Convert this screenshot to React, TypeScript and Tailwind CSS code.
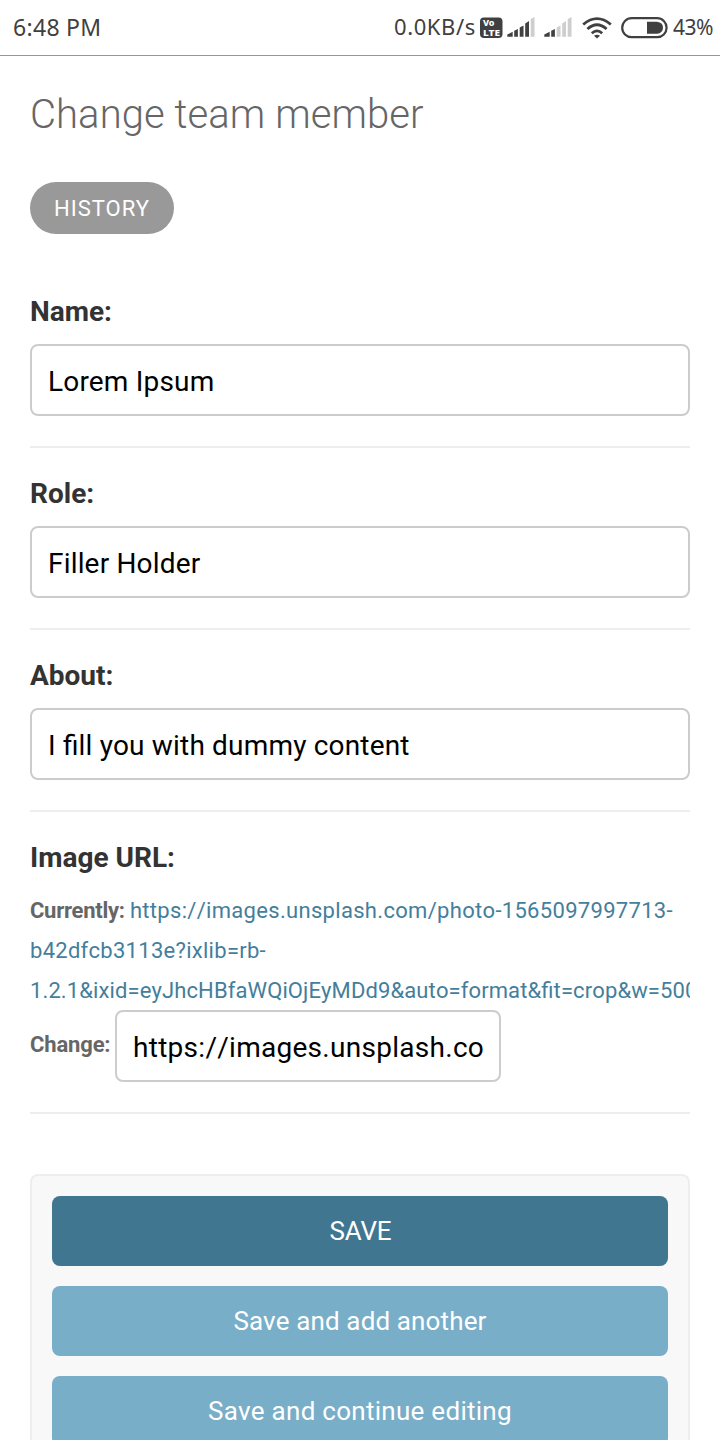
import React from "react";

function Signal({ active }: { active: number }) {
  const bars = [
    "M.300 19.700V17.500L5.700 14.800V19.700Z",
    "M7.200 19.700V13.800L10.900 12V19.700Z",
    "M12.700 19.700V10.500L16.500 8.500V19.700Z",
    "M18.200 19.700V6.500L22 4V19.700Z",
    "M23.700 19.700V2L27.500 0V19.700Z",
  ];
  return (
    <svg width="28" height="20" viewBox="0 0 28 20" className="shrink-0">
      {bars.map((d, i) => (
        <path key={i} d={d} fill={i < active ? "#404040" : "#cecece"} />
      ))}
    </svg>
  );
}

function StatusBar() {
  return (
    <header className="flex h-14 shrink-0 items-center border-b border-[#74a2b5] pl-[13px] text-[#404040] font-['Noto_Sans',sans-serif] text-[22px]">
      <span className="w-[381px] text-[23px] leading-none tracking-[0.3px]">6:48 PM</span>
      <span className="w-[86px] pb-[3px] leading-none tracking-[0.6px]">0.0KB/s</span>
      <svg width="23" height="22" viewBox="0 0 23 22" className="shrink-0">
        <rect x="0" y="0.500" width="22.500" height="20.500" rx="4" fill="#404040" />
        <text x="3" y="9.300" fontSize="9" fontWeight="800" fill="#fff">Vo</text>
        <text x="3" y="18.700" fontSize="9" fontWeight="800" fill="#fff" textLength="17" lengthAdjust="spacingAndGlyphs">LTE</text>
      </svg>
      <div className="ml-[4px] flex gap-[9px] pb-px">
        <Signal active={4} />
        <Signal active={2} />
      </div>
      <svg width="30" height="22" viewBox="0 0 30 22" className="ml-[10px] shrink-0" fill="none" stroke="#404040" strokeWidth="2.800">
        <path d="M1.200 7.500Q15-4.200 28.800 7.500M5.400 12Q15 3.500 24.600 12M9.800 16.200Q15 11.500 20.200 16.200" />
        <path d="M12 18.800Q15 16.500 18 18.800L15 21.500Z" fill="#404040" stroke="none" />
      </svg>
      <svg width="47" height="22" viewBox="0 0 47 22" className="ml-[9px] shrink-0">
        <rect x="1.200" y="1.200" width="44.400" height="19" rx="9.500" fill="none" stroke="#404040" strokeWidth="2.200" />
        <path d="M26 4.800H36Q42 5.500 42 10.700T36 16.800H26Z" fill="#404040" />
      </svg>
      <span className="ml-[5px] pb-px text-[21px] leading-none tracking-[-0.5px]">43%</span>
    </header>
  );
}

function Field({ label, value }: { label: string; value: string }) {
  return (
    <div className="h-[182px] border-b-2 border-[#eee] pt-[30px]">
      <label className="block h-[48px] text-[28px] leading-8 font-bold text-[#333]">{label}</label>
      <input
        className="block h-[72px] w-full rounded-lg border-2 border-[#ccc] bg-white px-4 pt-[3px] text-[28px] tracking-[0.18px] text-black [font-feature-settings:'liga'_1]"
        defaultValue={value}
      />
    </div>
  );
}

export default function App() {
  return (
    <div className="flex h-[1440px] w-[720px] flex-col overflow-hidden bg-white font-[Roboto,sans-serif]">
      <StatusBar />
      <main className="px-[30px]">
        <h1 className="mt-[35px] text-[40px] leading-[48px] font-light tracking-[0.08px] text-[#666]">Change team member</h1>
        <a className="mt-[43px] flex h-[52px] w-36 items-center justify-center rounded-full bg-[#999] text-[22px] tracking-[1px] text-white">
          HISTORY
        </a>
        <form className="mt-8">
          <Field label="Name:" value="Lorem Ipsum" />
          <Field label="Role:" value="Filler Holder" />
          <Field label="About:" value="I fill you with dummy content" />
          <div className="h-[302px] border-b-2 border-[#eee] pt-[30px]">
            <label className="block h-[49px] text-[28px] leading-8 font-bold text-[#333]">Image URL:</label>
            <p className="-mb-px overflow-hidden text-[22px] leading-10 font-bold tracking-[-0.27px] text-[#666]">
              Currently:{" "}
              <a className="font-normal whitespace-nowrap text-[#447e9b] [font-feature-settings:'liga'_1] [font-kerning:none]">
                <span className="tracking-[0.31px]">https://images.unsplash.com/photo-1565097997713-</span>
                <br />
                <span className="tracking-[0.28px]">b42dfcb3113e?ixlib=rb-</span>
                <br />
                <span className="tracking-[0.11px]">1.2.1&amp;ixid=eyJhcHBfaWQiOjEyMDd9&amp;auto=format&amp;fit=crop&amp;w=500&amp;q=60</span>
              </a>
            </p>
            <div className="flex text-[22px] font-bold text-[#666]">
              <span className="w-[85px] pt-[19px] leading-8 tracking-[-0.15px]">Change:</span>
              <input
                className="h-[72px] w-[386px] rounded-lg border-2 border-[#ccc] bg-white px-4 pt-[3px] text-[28px] font-normal tracking-[0.28px] text-black [font-kerning:none]"
                defaultValue="https://images.unsplash.co"
              />
            </div>
          </div>
          <div className="mt-[60px] flex flex-col gap-5 rounded-t-lg border-2 border-[#eee] bg-[#f8f8f8] p-5 text-[26px] text-white">
            <button type="button" className="h-[70px] rounded-lg bg-[#417690] pl-px tracking-[-0.2px]">SAVE</button>
            <button type="button" className="h-[70px] rounded-lg bg-[#79aec8] tracking-[0.14px]">Save and add another</button>
            <button type="button" className="h-[70px] rounded-lg bg-[#79aec8] tracking-[0.28px]">Save and continue editing</button>
          </div>
        </form>
      </main>
    </div>
  );
}
